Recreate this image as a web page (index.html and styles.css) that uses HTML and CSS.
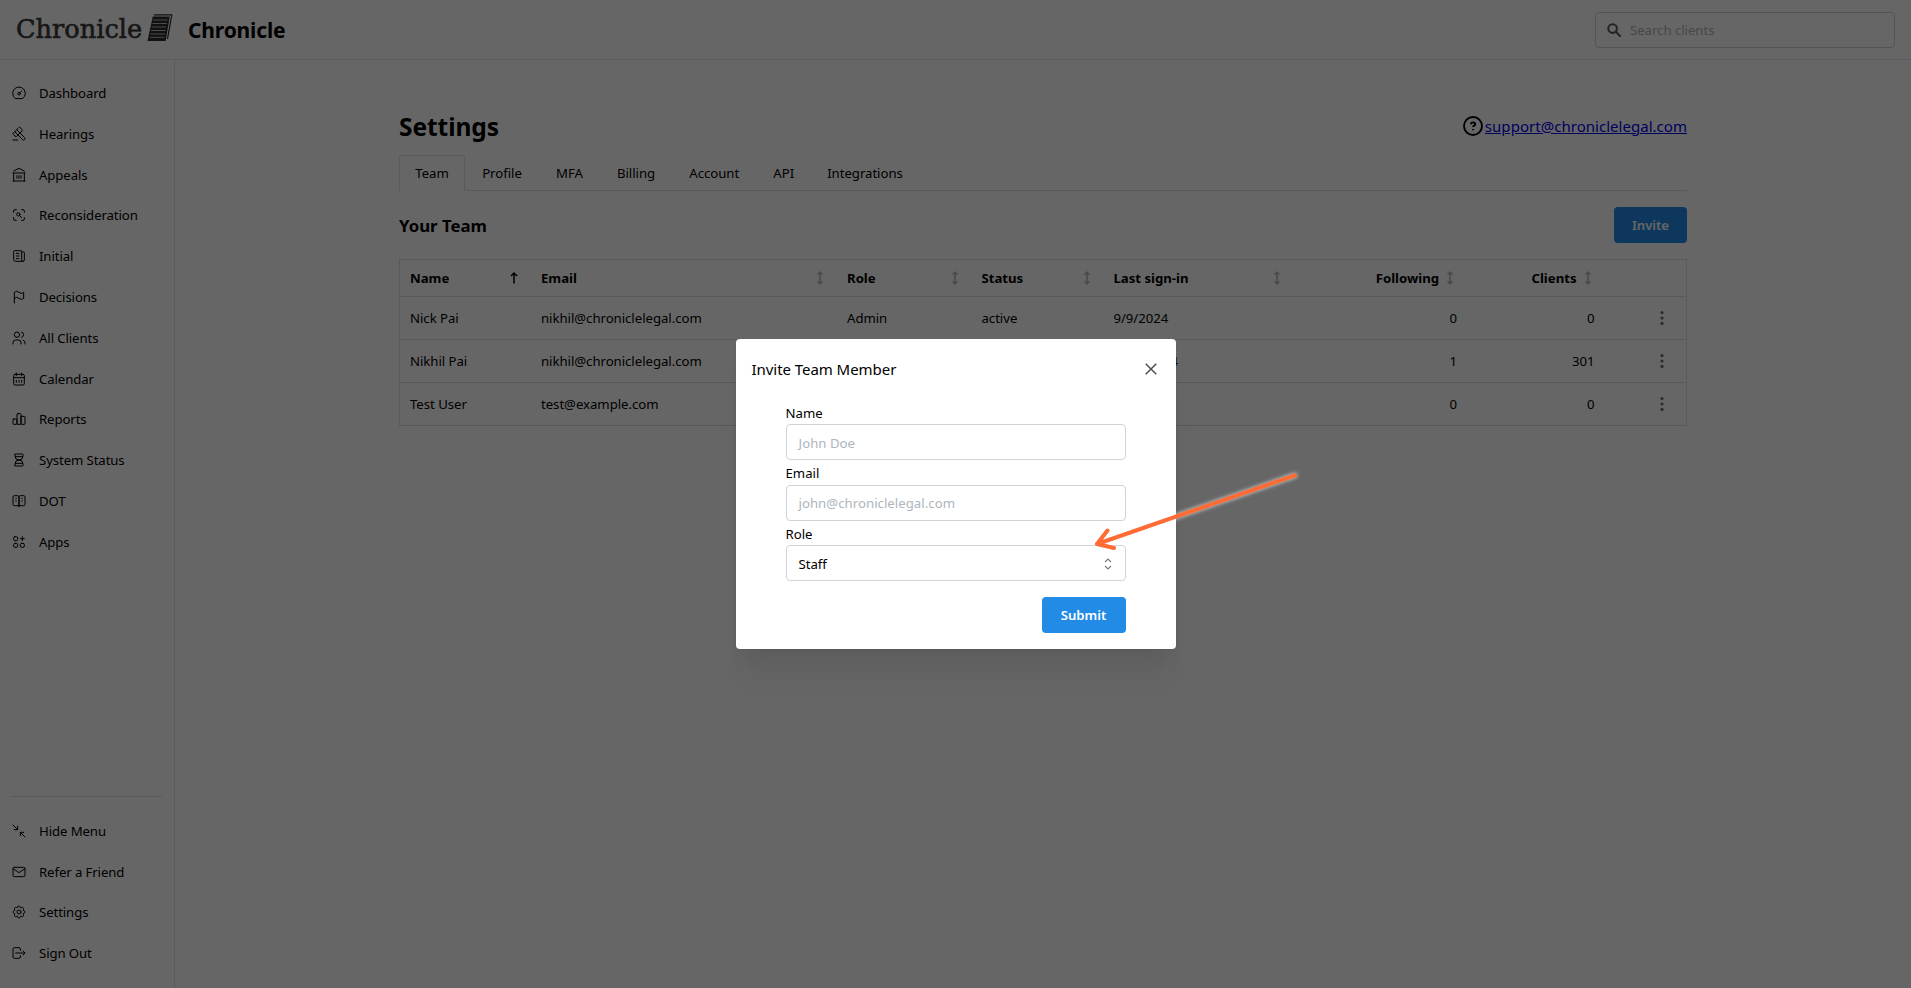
FILE: index.html
```html
<!DOCTYPE html>
<html lang="en">
<head>
<meta charset="utf-8">
<title>Chronicle</title>
<link rel="stylesheet" href="styles.css">
</head>
<body>
<svg class="defs" width="0" height="0" aria-hidden="true">
  <symbol id="sort" viewBox="0 0 14 14"><path d="M7 1.200v11.600M4.500 3.800 7 1.200l2.500 2.600M4.500 10.200 7 12.800l2.500-2.600"/></symbol>
  <symbol id="dots" viewBox="0 0 18 18"><circle cx="9" cy="3.600" r="1.600"/><circle cx="9" cy="9" r="1.600"/><circle cx="9" cy="14.400" r="1.600"/></symbol>
</svg>
<div class="app">
  <header class="header">
    <div class="logo">
      <span class="logo-word">Chronicle</span>
      <svg class="logo-mark" viewBox="0 0 26 28" width="26" height="28">
        <path d="M7 .8h17.800L20.500 25" fill="none" stroke="#2b2b2b" stroke-width="1.200"/>
        <path d="M5.800 2.500h17L18.600 27H.500z" fill="#2b2b2b"/>
        <path d="M6 6h14.500M5.300 9.500h14.500M4.700 13h14.500M4.100 16.500h14.500M3.500 20h14.500M2.900 23.300h14.500" stroke="#ccc" stroke-width=".9"/>
      </svg>
    </div>
    <div class="brand">Chronicle</div>
    <div class="search">
      <svg viewBox="0 0 14 14" width="14" height="14"><circle cx="5.600" cy="5.600" r="4.300"/><path d="m9 9 4 4"/></svg>
      <span>Search clients</span>
    </div>
  </header>
  <div class="body">
    <nav class="sidebar">
      <div class="nav">
        <a class="item"><svg viewBox="0 0 24 24"><path d="M6 20a9.500 9.500 0 1 1 12 0z"/><circle cx="12" cy="13" r="2"/><path d="M13.400 11.600 16 9"/></svg>Dashboard</a>
        <a class="item"><svg viewBox="0 0 24 24"><path d="m13 10 7.400 7.400a2.100 2.100 0 0 1-3 3L10 13M6 9l4 4M13 10 9 6M3 21h7"/><path d="m6.800 15.700-3.500-3.500a1 1 0 0 1 0-1.400l2.300-2.300 5-5 1.400-1.400a1 1 0 0 1 1.400 0l3.500 3.500a1 1 0 0 1 0 1.400l-8.700 8.700a1 1 0 0 1-1.400 0z"/></svg>Hearings</a>
        <a class="item"><svg viewBox="0 0 24 24"><path d="M3 21h18M3 9h18M4 9v12M20 9v12M4 6l8-4 8 4M9 13v4M12 13v4M15 13v4"/></svg>Appeals</a>
        <a class="item"><svg viewBox="0 0 24 24"><path d="M4 8V6a2 2 0 0 1 2-2h2M4 16v2a2 2 0 0 0 2 2h2M16 4h2a2 2 0 0 1 2 2v2M16 20h2a2 2 0 0 0 2-2v-2M13 13l3 3"/><circle cx="11" cy="11" r="2.500"/></svg>Reconsideration</a>
        <a class="item"><svg viewBox="0 0 24 24"><path d="M16 6h3a1 1 0 0 1 1 1v11a2 2 0 0 1-4 0V5a1 1 0 0 0-1-1H5a1 1 0 0 0-1 1v12a3 3 0 0 0 3 3h11M8 8h4M8 12h4M8 16h4"/></svg>Initial</a>
        <a class="item"><svg viewBox="0 0 24 24"><path d="M5 21V5a5 5 0 0 1 7 0 5 5 0 0 0 7 0v9a5 5 0 0 1-7 0 5 5 0 0 0-7 0"/></svg>Decisions</a>
        <a class="item"><svg viewBox="0 0 24 24"><circle cx="9" cy="7" r="4"/><path d="M3 21v-2a4 4 0 0 1 4-4h4a4 4 0 0 1 4 4v2M16 3.130a4 4 0 0 1 0 7.750M21 21v-2a4 4 0 0 0-3-3.850"/></svg>All Clients</a>
        <a class="item"><svg viewBox="0 0 24 24"><rect x="4" y="5" width="16" height="16" rx="2"/><path d="M16 3v4M8 3v4M4 10h16M8 14v3M12 14v3M16 14v3"/></svg>Calendar</a>
        <a class="item"><svg viewBox="0 0 24 24"><rect x="3" y="12" width="6" height="8" rx="1"/><rect x="9" y="4" width="6" height="16" rx="1"/><rect x="15" y="8" width="6" height="12" rx="1"/></svg>Reports</a>
        <a class="item"><svg viewBox="0 0 24 24"><path d="M6.500 7h11M6.500 17h11M6 20v-2a6 6 0 1 1 12 0v2a1 1 0 0 1-1 1H7a1 1 0 0 1-1-1zM6 4v2a6 6 0 1 0 12 0V4a1 1 0 0 0-1-1H7a1 1 0 0 0-1 1z"/></svg>System Status</a>
        <a class="item"><svg viewBox="0 0 24 24"><path d="M12 19H5a2 2 0 0 1-2-2V6a2 2 0 0 1 2-2h5a2 2 0 0 1 2 2v15V6a2 2 0 0 1 2-2h5a2 2 0 0 1 2 2v11a2 2 0 0 1-2 2h-7M7 8h1M7 12h1M16 8h1M16 12h1"/></svg>DOT</a>
        <a class="item"><svg viewBox="0 0 24 24"><rect x="4" y="4" width="6" height="6" rx="2"/><rect x="4" y="14" width="6" height="6" rx="2"/><rect x="14" y="14" width="6" height="6" rx="2"/><path d="M14 7h6M17 4v6"/></svg>Apps</a>
      </div>
      <div class="nav nav-bottom">
        <a class="item"><svg viewBox="0 0 24 24"><path d="M5 10h5V5M3 3l7 7M14 19v-5h5M14 14l7 7"/></svg>Hide Menu</a>
        <a class="item"><svg viewBox="0 0 24 24"><rect x="3" y="5" width="18" height="14" rx="2"/><path d="m3 7 9 6 9-6"/></svg>Refer a Friend</a>
        <a class="item"><svg viewBox="0 0 24 24"><path d="M10.325 4.317c.426-1.756 2.924-1.756 3.350 0a1.724 1.724 0 0 0 2.573 1.066c1.543-.940 3.310.826 2.370 2.370a1.724 1.724 0 0 0 1.065 2.572c1.756.426 1.756 2.924 0 3.350a1.724 1.724 0 0 0-1.066 2.573c.940 1.543-.826 3.310-2.370 2.370a1.724 1.724 0 0 0-2.572 1.065c-.426 1.756-2.924 1.756-3.350 0a1.724 1.724 0 0 0-2.573-1.066c-1.543.940-3.310-.826-2.370-2.370a1.724 1.724 0 0 0-1.065-2.572c-1.756-.426-1.756-2.924 0-3.350a1.724 1.724 0 0 0 1.066-2.573c-.940-1.543.826-3.310 2.370-2.370 1 .608 2.296.070 2.572-1.065z"/><circle cx="12" cy="12" r="3"/></svg>Settings</a>
        <a class="item"><svg viewBox="0 0 24 24"><path d="M14 8V6a2 2 0 0 0-2-2H5a2 2 0 0 0-2 2v12a2 2 0 0 0 2 2h7a2 2 0 0 0 2-2v-2M7 12h14l-3-3M21 12l-3 3"/></svg>Sign Out</a>
      </div>
    </nav>
    <main class="main">
      <div class="title-row">
        <h1>Settings</h1>
        <div class="support">
          <svg viewBox="0 0 20 20" width="20" height="20"><circle cx="10" cy="10" r="9"/><path d="M8 8.200c0-2.400 4.200-2.400 4.200 0 0 1.500-2.100 1.400-2.100 2.900M10.100 13v1.200"/></svg>
          <a href="#">support@chroniclelegal.com</a>
        </div>
      </div>
      <div class="tabs">
        <div class="tab active">Team</div><div class="tab">Profile</div><div class="tab">MFA</div><div class="tab">Billing</div><div class="tab">Account</div><div class="tab">API</div><div class="tab">Integrations</div>
      </div>
      <div class="team-row"><h2>Your Team</h2><button class="btn invite">Invite</button></div>
      <div class="table">
        <div class="row head">
          <div>Name<svg class="up" viewBox="0 0 14 14"><path d="M7 2v10.500M4 5l3-3 3 3"/></svg></div>
          <div>Email<svg><use href="#sort"/></svg></div>
          <div>Role<svg><use href="#sort"/></svg></div>
          <div>Status<svg><use href="#sort"/></svg></div>
          <div>Last sign-in<svg><use href="#sort"/></svg></div>
          <div class="num">Following<svg><use href="#sort"/></svg></div>
          <div class="num">Clients<svg><use href="#sort"/></svg></div>
          <div></div>
        </div>
        <div class="row"><div>Nick Pai</div><div>nikhil@chroniclelegal.com</div><div>Admin</div><div>active</div><div>9/9/2024</div><div class="num">0</div><div class="num">0</div><div class="more"><svg><use href="#dots"/></svg></div></div>
        <div class="row"><div>Nikhil Pai</div><div>nikhil@chroniclelegal.com</div><div></div><div></div><div class="date">9/10/2024</div><div class="num">1</div><div class="num">301</div><div class="more"><svg><use href="#dots"/></svg></div></div>
        <div class="row"><div>Test User</div><div>test@example.com</div><div></div><div></div><div></div><div class="num">0</div><div class="num">0</div><div class="more"><svg><use href="#dots"/></svg></div></div>
      </div>
    </main>
  </div>
</div>
<div class="overlay">
  <section class="modal">
    <div class="modal-head">
      <span>Invite Team Member</span>
      <svg viewBox="0 0 12 12" width="12" height="12"><path d="m.700.700 10.600 10.600M11.300.700.700 11.300"/></svg>
    </div>
    <div class="form">
      <label>Name</label><div class="field placeholder">John Doe</div>
      <label>Email</label><div class="field placeholder">john@chroniclelegal.com</div>
      <label>Role</label><div class="field">Staff<svg viewBox="0 0 8 12" width="8" height="12"><path d="m1 4 3-3 3 3M1 8l3 3 3-3"/></svg></div>
      <button class="btn submit">Submit</button>
    </div>
  </section>
  <svg class="arrow" viewBox="0 0 220 90" width="220" height="90"><path d="M210 10.300 12 79M22.500 65.500 12 79l17 4"/></svg>
</div>
</body>
</html>
```
FILE: styles.css
```css
* { box-sizing: border-box; }
html, body { margin: 0; height: 100%; overflow: hidden; }
body { font-family: "Noto Sans", "Open Sans", sans-serif; font-size: 13.2px; letter-spacing: -0.04px; line-height: 20px; color: #000; background: #fff; }
.defs { position: absolute; }
h1, h2 { margin: 0; font-weight: 700; }

.app { height: 988px; display: flex; flex-direction: column; }
.header { height: 60px; flex: none; border-bottom: 1px solid #e3e6e9; display: flex; align-items: center; padding: 0 16px 0 16px; }
.logo { display: flex; align-items: center; width: 172px; gap: 4px; }
.logo-word { font-family: "DejaVu Serif", serif; font-size: 25.6px; line-height: 30px; letter-spacing: 0; width: 127px; color: #3a3a3a; -webkit-text-stroke: 0.6px #3a3a3a; padding-bottom: 2px; }
.logo-mark { margin-top: -4px; }
.brand { font-weight: 700; font-size: 21px; letter-spacing: -0.15px; line-height: 30px; flex: 1; padding-top: 1px; }
.search { width: 300px; height: 36px; border: 1px solid #ced4da; border-radius: 4px; display: flex; align-items: center; gap: 9.5px; padding-left: 10.5px; color: #adb5bd; }
.search svg { fill: none; stroke: #555; stroke-width: 2; stroke-linecap: round; }
.search span { padding-top: 1px; }

.body { flex: 1; display: flex; min-height: 0; }
.sidebar { width: 175px; border-right: 1px solid #dee2e6; padding: 12.6px 12px 14.5px 11px; display: flex; flex-direction: column; justify-content: space-between; }
.nav-bottom { border-top: 1px solid #dee2e6; padding-top: 13px; }
.item { display: flex; align-items: center; gap: 12px; height: 40.8px; letter-spacing: -0.1px; }
.item svg { width: 16px; height: 16px; fill: none; stroke: #000; stroke-width: 1.5; stroke-linecap: round; stroke-linejoin: round; }

.main { padding: 48px 0 0 224px; width: 1512px; }
.title-row { display: flex; justify-content: space-between; height: 47px; }
h1 { font-size: 24.5px; letter-spacing: -0.05px; line-height: 38px; }
.support { display: flex; align-items: center; height: 35px; gap: 2px; font-size: 15px; letter-spacing: 0.03px; }
.support svg { fill: none; stroke: #000; stroke-width: 1.9; }
.support a { color: #0000ee; }
.tabs { height: 36px; display: grid; grid-template-columns: 66px 74px 61px 72px 84.5px 54.5px 108px; border-bottom: 1px solid #dee2e6; }
.tab { display: flex; align-items: center; justify-content: center; height: 36px; }
.tab.active { border: 1px solid #dee2e6; border-bottom-color: #fff; border-radius: 4px 4px 0 0; }
.team-row { height: 68px; display: flex; align-items: center; justify-content: space-between; }
h2 { font-size: 16.8px; letter-spacing: 0; line-height: 24px; padding-top: 1px; }
.btn { font: inherit; letter-spacing: inherit; font-weight: 600; color: #fff; background: #228be6; border: 0; border-radius: 4px; height: 36px; padding: 0; }
.invite { width: 73px; }

.table { border: 1px solid #dee2e6; }
.row { display: grid; grid-template-columns: 131px 306px 134.5px 132px 190.5px 173px 137.5px 1fr; height: 43px; border-bottom: 1px solid #dee2e6; }
.row:last-child { border-bottom: 0; height: 42px; }
.row > div { display: flex; align-items: center; justify-content: space-between; padding: 0 10px; }
.row.head { height: 37px; font-weight: 700; letter-spacing: -0.02px; }
.head svg { width: 14px; height: 14px; fill: none; stroke: #b4b9be; stroke-width: 1.6; }
.head svg.up { stroke: #000; stroke-width: 1.5; }
.row > .num { justify-content: flex-end; gap: 4px; }
.row > .date { letter-spacing: 0.25px; }
.more svg { width: 18px; height: 18px; fill: #6a6f75; margin-left: 37px; flex: none; }
.row > .more { padding-left: 11px; }

.overlay { position: absolute; inset: 0; background: rgba(0, 0, 0, 0.6); display: flex; align-items: flex-start; justify-content: center; padding-top: 339px; }
.modal { width: 440px; height: 310px; background: #fff; border-radius: 4px; box-shadow: 0 1px 3px rgba(0,0,0,.05), 0 36px 28px -7px rgba(0,0,0,.05), 0 17px 17px -7px rgba(0,0,0,.04); }
.modal-head { height: 60px; display: flex; align-items: center; justify-content: space-between; padding: 0 19px 0 16px; font-size: 15px; letter-spacing: -0.05px; }
.modal-head svg { fill: none; stroke: #495057; stroke-width: 1.5; }
.form { display: flex; flex-direction: column; padding: 0.5px 50px 0; }
label { height: 24.5px; line-height: 26.5px; letter-spacing: 0; }
.field { height: 36px; border: 1px solid #ced4da; border-radius: 4px; padding: 1px 13px 0 12px; display: flex; align-items: center; justify-content: space-between; }
.placeholder { color: #adb5bd; letter-spacing: 0.03px; }
.field svg { fill: none; stroke: #777; stroke-width: 1.1; }
.submit { width: 84px; align-self: flex-end; margin-top: 16px; }
.arrow { position: absolute; left: 1085px; top: 465px; fill: none; stroke: #ff6b35; stroke-width: 4; stroke-linecap: round; stroke-linejoin: round; filter: drop-shadow(0 0 2px rgba(255,255,255,.8)); }
```
